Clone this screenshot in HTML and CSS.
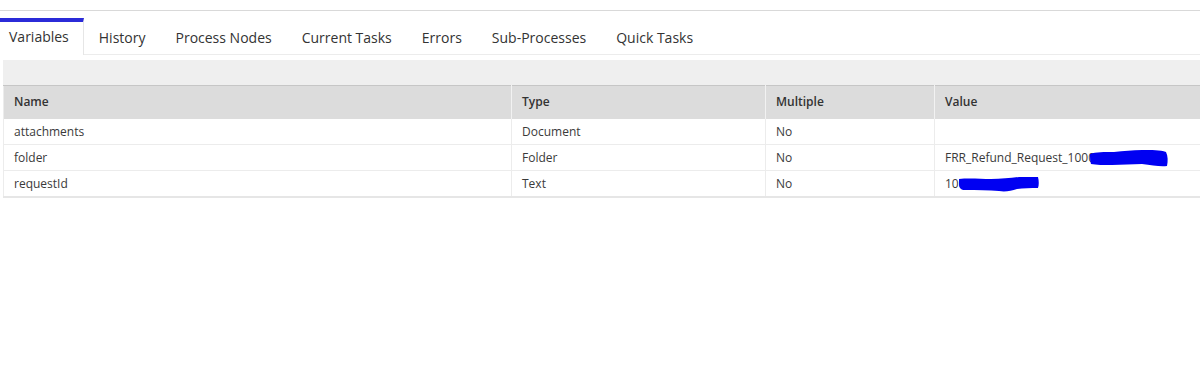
FILE: index.html
```html
<!DOCTYPE html>
<html>
<head>
<meta charset="utf-8">
<link rel="stylesheet" href="styles.css">
</head>
<body>
<div class="topline"></div>
<nav class="tabs">
  <div class="tab active">Variables</div>
  <div class="tab">History</div>
  <div class="tab">Process Nodes</div>
  <div class="tab">Current Tasks</div>
  <div class="tab">Errors</div>
  <div class="tab">Sub-Processes</div>
  <div class="tab">Quick Tasks</div>
</nav>
<section class="panel">
  <div class="toolbar"></div>
  <table class="grid">
    <colgroup>
      <col class="c-name"><col class="c-type"><col class="c-multi"><col class="c-value">
    </colgroup>
    <thead>
      <tr><th>Name</th><th>Type</th><th>Multiple</th><th>Value</th></tr>
    </thead>
    <tbody>
      <tr><td>attachments</td><td>Document</td><td>No</td><td></td></tr>
      <tr><td>folder</td><td>Folder</td><td>No</td><td class="val">FRR_Refund_Request_1000<svg class="redact r1" width="78" height="17" viewBox="0 0 78 17"><path d="M0 4 C6 2 14 2 24 2 C34 1 42 0 52 0 C62 0 70 0 76 2 C78 6 78 11 77 16 C70 17 62 15 52 14 C42 14 32 15 22 15 C14 15 6 15 1 14 C0 11 0 8 0 4 Z" fill="#0000f2"/></svg></td></tr>
      <tr><td>requestId</td><td>Text</td><td>No</td><td class="val">1000<svg class="redact r2" width="80" height="15" viewBox="0 0 80 15"><path d="M0 2 C10 1 22 2 32 2 C42 2 52 1 60 0 C68 0 74 0 79 0 C80 4 80 8 79 11 C72 11 64 11 58 12 C52 14 46 15 40 14 C30 13 18 13 6 13 C2 13 0 11 0 7 Z" fill="#0000f2"/></svg></td></tr>
    </tbody>
  </table>
</section>
</body>
</html>
```

FILE: styles.css
```css
* { box-sizing: border-box; }
body {
  margin: 0;
  background: #fff;
  font-family: "Open Sans", "Noto Sans", sans-serif;
  color: #333;
  overflow: hidden;
}
.topline {
  height: 11px;
  border-bottom: 1px solid #d9d9d9;
}
.tabs {
  display: flex;
  align-items: flex-end;
  height: 44px;
  border-bottom: 1px solid #ececec;
}
.tab {
  font-size: 14px;
  line-height: 30px;
  height: 32px;
  padding: 0 15px;
  color: #333;
  margin-bottom: -1px;
}
.tab.active {
  height: 37px;
  padding: 0 14px 0 9px;
  border-top: 4px solid #2b2bd8;
  border-right: 1px solid #e6e6e6;
  background: #fff;
  line-height: 30px;
}
.panel {
  margin: 5px 0 0 3px;
}
.toolbar {
  height: 25px;
  background: #efefef;
}
.grid {
  width: 1240px;
  border-collapse: collapse;
  table-layout: fixed;
  font-size: 12px;
  border-left: 1px solid #ececec;
  border-bottom: 2px solid #e6e6e6;
}
.c-name { width: 508px; }
.c-type { width: 254px; }
.c-multi { width: 169px; }
.c-value { width: 309px; }
.grid th {
  height: 33px;
  background: #dcdcdc;
  border-top: 1px solid #c6c6c6;
  border-right: 1px solid #f2f2f2;
  text-align: left;
  font-weight: 600;
  color: #333;
  padding: 0 10px 1px;
}
.grid td {
  height: 26px;
  padding: 0 10px;
  border-bottom: 1px solid #ececec;
  border-right: 1px solid #ececec;
  color: #3a3a3a;
  white-space: nowrap;
  overflow: hidden;
}
.grid tbody tr:last-child td { border-bottom: none; }
.val { position: relative; }
.redact { position: absolute; }
.r1 { left: 155px; top: 5px; }
.r2 { left: 24px; top: 6px; }
```
